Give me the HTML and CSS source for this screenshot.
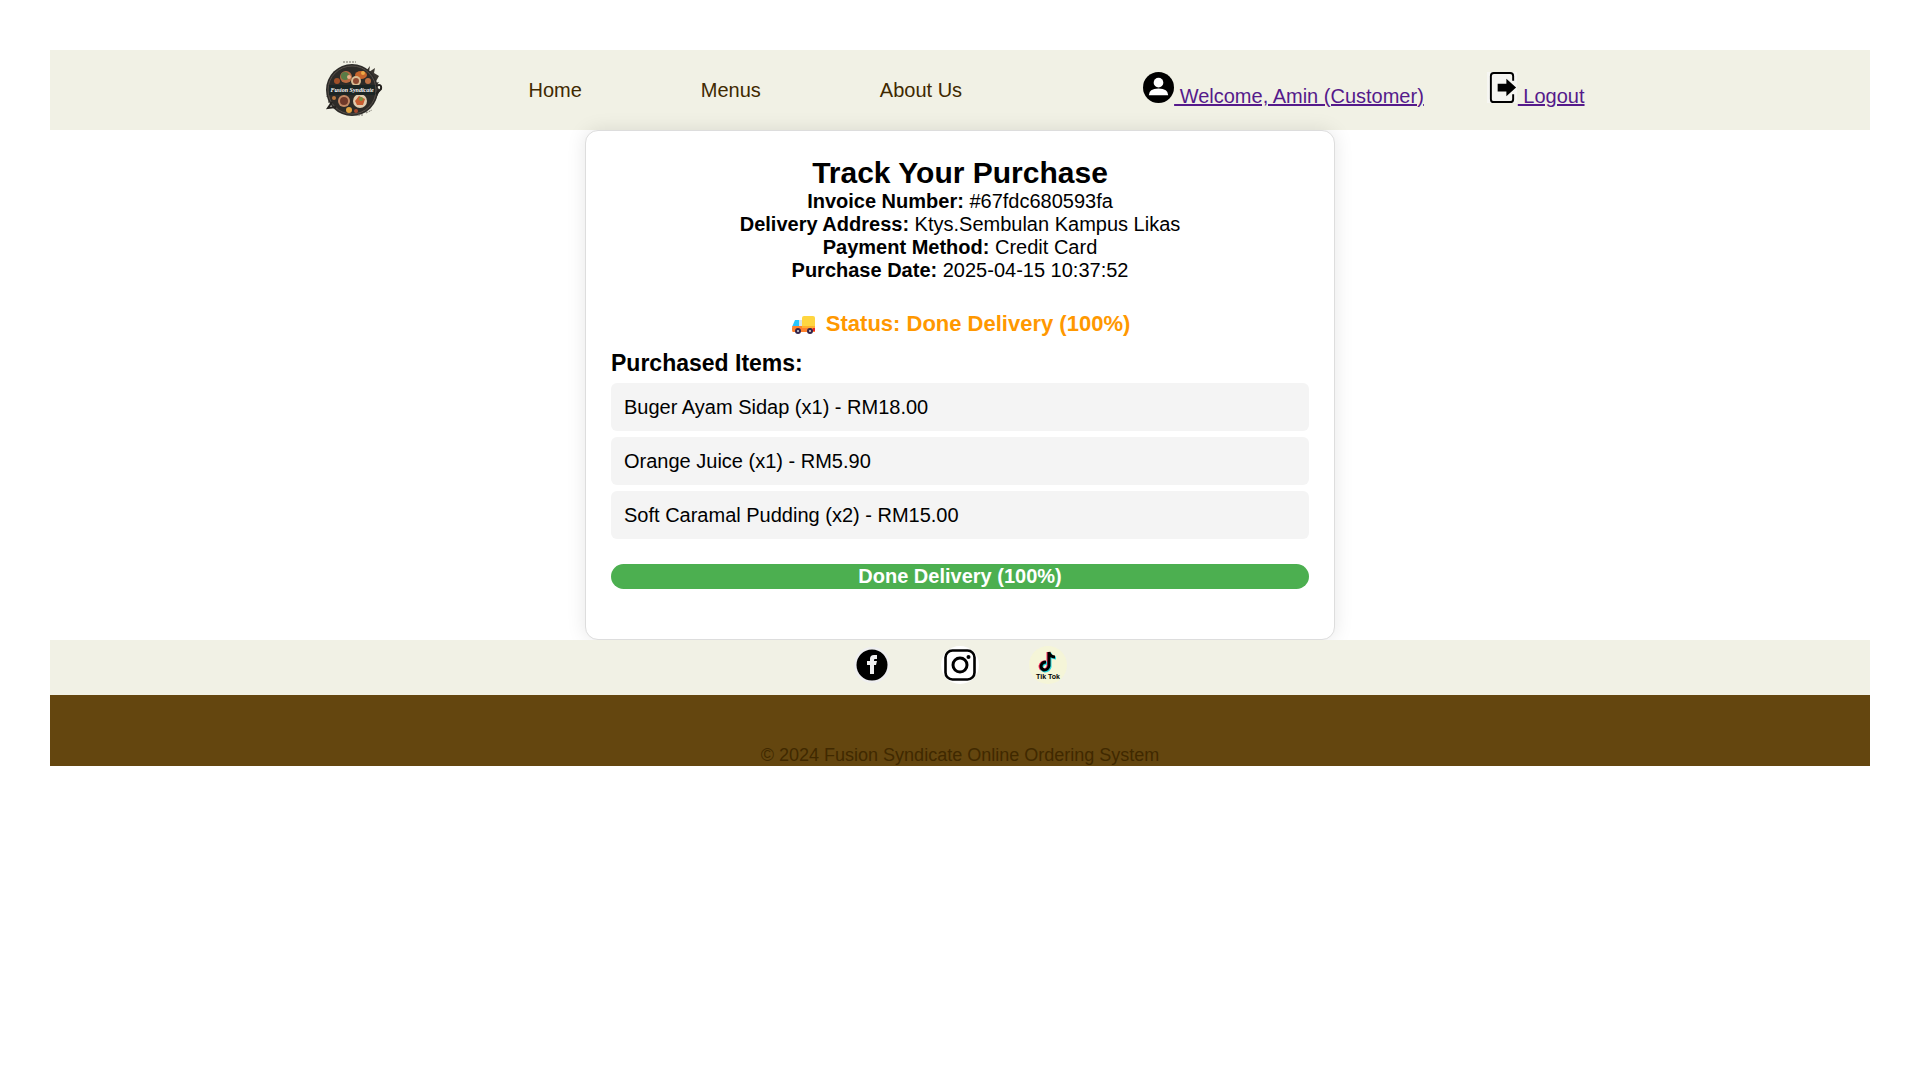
FILE: index.html
```html
<!DOCTYPE html>
<html lang="en">
<head>
<meta charset="utf-8">
<meta name="viewport" content="width=device-width, initial-scale=1">
<title>Track Your Purchase</title>
<link rel="stylesheet" href="styles.css">
</head>
<body>
<header class="header">
  <svg class="logo" viewBox="0 0 62 62" role="img" aria-label="Fusion Syndicate">
    <path d="M5 44 7 37 3 38 8 33 50 24 57 31 53 40 49 46 44 51 20 53 10 46 14 44 9 41Z" fill="#302d29"/>
    <path d="M43 12 47 7 46 13 52 9 51 14 56 17 52 24 56 23 53 28Z" fill="#3a352f"/>
    <circle cx="29" cy="31" r="26" fill="#2d2b28"/>
    <circle cx="29" cy="31" r="24" fill="none" stroke="#57504a"/>
    <circle cx="23" cy="18" r="6" fill="#b96a41"/><circle cx="22" cy="17" r="4" fill="#597b45"/><circle cx="26" cy="18" r="2" fill="#e8b08a"/>
    <ellipse cx="38" cy="16" rx="6" ry="4" fill="#c6652c"/><circle cx="40" cy="14" r="2" fill="#edaa46"/>
    <circle cx="33" cy="22" r="5" fill="#d9bc93"/><circle cx="33" cy="22" r="3" fill="#8e4931"/>
    <circle cx="14" cy="22" r="3" fill="#a15028"/><circle cx="45" cy="22" r="3" fill="#bd7145"/>
    <circle cx="21" cy="42" r="6" fill="#c48965"/><circle cx="21" cy="42" r="4" fill="#70392a"/>
    <circle cx="37" cy="42" r="7" fill="#dfcbae"/><path d="M32 42 36 37 42 40 40 46 34 46Z" fill="#c75c30"/><circle cx="38" cy="40" r="2" fill="#719241"/>
    <circle cx="26" cy="51" r="3" fill="#e1a23f"/><circle cx="33" cy="52" r="2" fill="#a4482d"/><circle cx="11" cy="39" r="2" fill="#b7773d"/>
    <path d="M6 26h46v10H6z" fill="#1c2524"/>
    <path d="M53 27q6-3 5 3l-5 5m-44 8-4 6 8-1" fill="none" stroke="#24211e" stroke-width="2"/>
    <path d="M20 3h13M35 56h5m3-2 6-3" stroke="#77736a" stroke-dasharray="2 1"/>
    <text x="29" y="33" class="logo-text" text-anchor="middle">Fusion Syndicate</text>
  </svg>
  <nav class="nav">
    <a href="#">Home</a>
    <a href="#">Menus</a>
    <a href="#">About Us</a>
  </nav>
  <div class="account">
    <a href="#"><svg class="account-icon" viewBox="0 0 32 32" aria-hidden="true"><circle cx="16" cy="16" r="16"/><circle cx="16" cy="11" r="5" fill="#fff"/><path d="M6 24q0-7 10-7t10 7z" fill="#fff"/></svg> Welcome, Amin (Customer)</a>
    <a href="#"><svg class="account-icon" viewBox="0 0 32 32" aria-hidden="true"><path d="M0 0h31v32H0z" fill="#f6f6f2"/><path d="M27 9V4q0-3-3-3H7Q4 1 4 4v24q0 3 3 3h17q3 0 3-3v-5" fill="none" stroke="#000" stroke-width="2"/><path d="M11 12h9V7l10 9-10 9v-5h-9z"/></svg> Logout</a>
  </div>
</header>

<main class="card">
  <h1 class="title">Track Your Purchase</h1>
  <p><strong>Invoice Number:</strong> #67fdc680593fa</p>
  <p><strong>Delivery Address:</strong> Ktys.Sembulan Kampus Likas</p>
  <p><strong>Payment Method:</strong> Credit Card</p>
  <p><strong>Purchase Date:</strong> 2025-04-15 10:37:52</p>
  <p class="status"><svg class="truck" viewBox="0 0 28 20" aria-hidden="true"><path d="M8 5h5v10H8z" fill="#d9e3e8"/><rect x="12" y="1" width="13" height="12" rx="2" fill="#ffd640"/><path d="M2 12 5 5h4v7z" fill="#26c6ff"/><path d="M3 11h22v6H3q-1 0-1-2v-2q0-2 1-2z" fill="#ff822d"/><path d="M12 11h13v2H12z" fill="#ffb02e"/><path d="M23 13h2v3h-2z" fill="#e8202c"/><circle cx="8" cy="16" r="3" fill="#35244a"/><circle cx="20" cy="16" r="3" fill="#35244a"/><circle cx="8" cy="16" r="1" fill="#ddd"/><circle cx="20" cy="16" r="1" fill="#ddd"/></svg> Status: Done Delivery (100%)</p>
  <h2 class="subtitle">Purchased Items:</h2>
  <ul class="items">
    <li>Buger Ayam Sidap (x1) - RM18.00</li>
    <li>Orange Juice (x1) - RM5.90</li>
    <li>Soft Caramal Pudding (x2) - RM15.00</li>
  </ul>
  <div class="progress"><div class="progress-fill" style="width: 100%">Done Delivery (100%)</div></div>
</main>

<footer>
  <div class="social">
    <a href="#" aria-label="Facebook"><svg viewBox="0 0 38 38"><circle cx="19" cy="19" r="18" fill="#efeff0"/><circle cx="19" cy="19" r="15.5"/><path d="M17 28v-9h-3v-4h3v-2q0-4 4-4h3v4h-2q-1 0-1 1v1h3l-1 4h-2v9z" fill="#efeff0"/></svg></a>
    <a href="#" aria-label="Instagram"><svg viewBox="0 0 38 38"><circle cx="19" cy="19" r="19" fill="#fff"/><rect x="4.500" y="4.500" width="29" height="29" rx="7" fill="none" stroke="#000" stroke-width="2.600"/><circle cx="19" cy="19" r="7" fill="none" stroke="#000" stroke-width="3"/><circle cx="27.500" cy="11" r="2"/></svg></a>
    <a href="#" aria-label="TikTok"><svg viewBox="0 0 38 38"><circle cx="19" cy="19" r="19" fill="#f5f5d8"/><g fill="none" stroke-width="3"><path d="M19 6v14q-1 4-5 4-3-1-3-4 1-4 5-4M19 6q1 5 6 5" stroke="#ff2b59"/><path d="M21 7v14q-1 4-5 4-4-1-3-4 1-4 5-4M21 7q1 5 6 5" stroke="#22d9e0"/><path d="M20 6v14q-1 4-5 4-3-1-3-4 1-4 5-4M20 6q1 5 6 5" stroke="#000"/></g><text x="19" y="33" class="tiktok-text" text-anchor="middle">Tik Tok</text></svg></a>
  </div>
  <p class="copyright">© 2024 Fusion Syndicate Online Ordering System</p>
</footer>
</body>
</html>
```

FILE: styles.css
```css
* {
  box-sizing: border-box;
  margin: 0;
  padding: 0;
}

body {
  padding: 50px;
  background: #fff;
  color: #000;
  font: 20px/23px "Liberation Sans", Arial, sans-serif;
}

.header {
  display: flex;
  align-items: center;
  justify-content: center;
  min-height: 80px;
  padding-right: 12px;
  background: #f1f1e5;
}

.logo {
  width: 62px;
  height: 62px;
}

.logo-text {
  fill: #fff;
  font: italic bold 6px "Liberation Serif", serif;
}

.nav {
  display: flex;
  gap: 119px;
  margin: 0 181px 0 143px;
}

.nav a {
  color: #402900;
  text-decoration: none;
}

.account {
  display: flex;
  gap: 63px;
}

.account a {
  color: #551a8b;
}

.account-icon {
  width: 31px;
  height: 31px;
}

.card {
  max-width: 750px;
  margin: 0 auto;
  padding: 25px;
  border: 1px solid #ddd;
  border-radius: 13px;
  background: #fff;
  box-shadow: 0 0 19px rgba(0, 0, 0, 0.1);
  text-align: center;
}

.title {
  font-size: 30px;
  line-height: 34px;
}

.status {
  margin-top: 28px;
  color: #ff9800;
  font-size: 22px;
  font-weight: bold;
  line-height: 27px;
}

.truck {
  width: 28px;
  height: 20px;
  margin-right: 2px;
  vertical-align: -4px;
}

.subtitle {
  margin: 13px 0 7px;
  font-size: 23px;
  line-height: 26px;
  text-align: left;
}

.items {
  display: grid;
  gap: 6px;
  list-style: none;
  text-align: left;
}

.items li {
  padding: 12px 13px;
  border-radius: 6px;
  background: #f4f4f4;
  line-height: 24px;
}

.progress {
  margin: 25px 0;
  overflow: hidden;
  border-radius: 13px;
  background: #ddd;
}

.progress-fill {
  background: #4caf50;
  color: #fff;
  font-weight: bold;
  line-height: 25px;
}

.social {
  display: flex;
  justify-content: center;
  gap: 50px;
  padding: 6px 0 11px;
  background: #f1f1e5;
}

.social a,
.social svg {
  display: block;
  width: 38px;
  height: 38px;
}

.tiktok-text {
  font: bold 7px "Liberation Sans", sans-serif;
}

.copyright {
  padding-top: 50px;
  background: #64460f;
  color: #402900;
  font-size: 18px;
  line-height: 21px;
  text-align: center;
}
```
